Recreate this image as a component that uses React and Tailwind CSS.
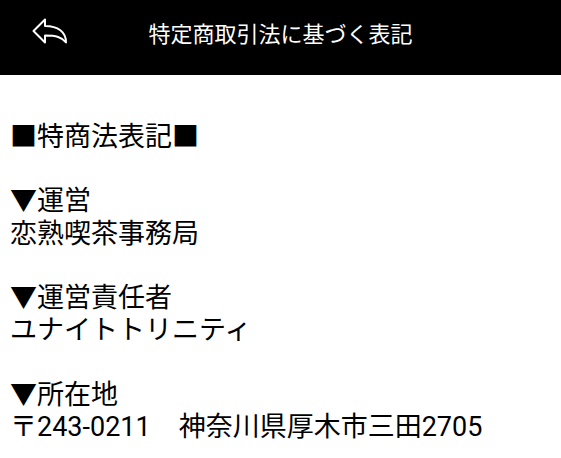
import React from "react";

export default function App() {
  const lines = [
    "■特商法表記■",
    "",
    "▼運営",
    "恋熟喫茶事務局",
    "",
    "▼運営責任者",
    "ユナイトトリニティ",
    "",
    "▼所在地",
  ];
  return (
    <div
      className="w-[561px] h-[458px] bg-white overflow-hidden"
      style={{ fontFamily: "Roboto, 'Noto Sans CJK JP', sans-serif" }}
    >
      <header className="h-[75px] bg-black flex items-center relative">
        <button className="absolute left-[30px] top-[15px] w-[40px] h-[32px]">
          <svg width="40" height="32" viewBox="30 15 40 32" fill="none">
            <path
              d="M33.5 31 L45 19.5 L45 26 C58 26 66 32 66 42.5 C62 37 56 35.5 45 35.5 L45 42.5 Z"
              stroke="white"
              strokeWidth="2"
              strokeLinejoin="round"
            />
          </svg>
        </button>
        <h1 className="flex-1 text-center text-white text-[22px] leading-[30px] mt-[-6px]">
          特定商取引法に基づく表記
        </h1>
      </header>
      <main className="pt-[46px] pl-[10px] text-black text-[27px] leading-[32.2px] whitespace-pre">
        {lines.map((l, i) => (
          <div key={i} className="h-[32.2px]">
            {l}
          </div>
        ))}
        <div className="h-[32.2px]">
          〒243-0211{"\u3000"}
          <span className="ml-[1px]">神奈川県厚木市三田2705</span>
        </div>
      </main>
    </div>
  );
}
